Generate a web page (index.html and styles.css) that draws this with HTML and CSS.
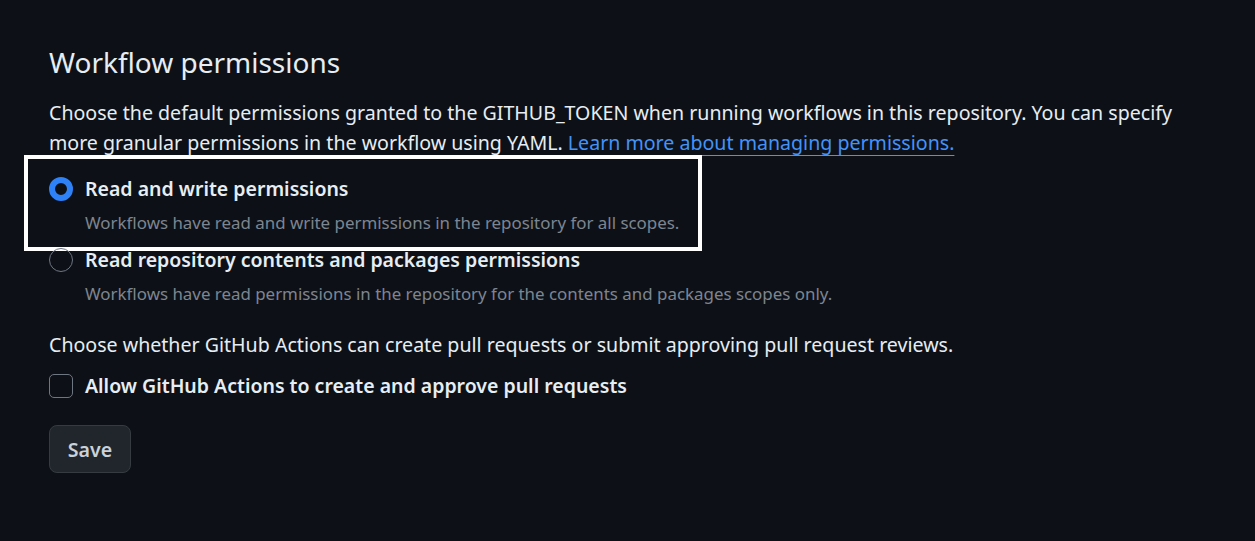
FILE: index.html
```html
<!DOCTYPE html>
<html lang="en">
<head>
<meta charset="utf-8">
<title>Workflow permissions</title>
<link rel="stylesheet" href="styles.css">
</head>
<body>
<main class="page">
  <h2 class="title">Workflow permissions</h2>
  <p class="lead">Choose the default permissions granted to the GITHUB_TOKEN when running workflows in this repository. You can specify more granular permissions in the workflow using YAML. <a href="#" class="link">Learn more about managing permissions.</a></p>

  <div class="options">
    <label class="option highlighted">
      <span class="radio checked"></span>
      <span class="option-text">
        <span class="option-label">Read and write permissions</span>
        <span class="option-note">Workflows have read and write permissions in the repository for all scopes.</span>
      </span>
    </label>
    <label class="option">
      <span class="radio"></span>
      <span class="option-text">
        <span class="option-label">Read repository contents and packages permissions</span>
        <span class="option-note">Workflows have read permissions in the repository for the contents and packages scopes only.</span>
      </span>
    </label>
  </div>

  <p class="lead second">Choose whether GitHub Actions can create pull requests or submit approving pull request reviews.</p>
  <label class="check-row">
    <span class="checkbox"></span>
    <span class="option-label">Allow GitHub Actions to create and approve pull requests</span>
  </label>

  <button class="btn" type="button">Save</button>
</main>
</body>
</html>
```

FILE: styles.css
```css
html, body {
  margin: 0;
  padding: 0;
  background: #0d1117;
}
body {
  font-family: "Noto Sans", "Open Sans", sans-serif;
  color: #e6edf3;
  font-size: 19.6px;
  line-height: 30px;
}
.page {
  padding: 40px 49px 0 49px;
}
.title {
  margin: 0;
  font-size: 28px;
  font-weight: 400;
  line-height: 44px;
}
.lead {
  margin: 14px 0 0 0;
  max-width: 1150px;
}
.link {
  color: #4493f8;
  text-decoration: underline;
  text-underline-offset: 5px;
}
.options {
  margin-top: 16px;
  display: flex;
  flex-direction: column;
  gap: 4px;
}
.option {
  display: flex;
  gap: 12px;
  align-items: flex-start;
  position: relative;
}
.highlighted::after {
  content: "";
  position: absolute;
  left: -25px;
  top: -19px;
  width: 670px;
  height: 88px;
  border: 4px solid #ffffff;
}
.radio {
  flex: none;
  width: 24px;
  height: 24px;
  border-radius: 50%;
  border: 1px solid #6e7681;
  box-sizing: border-box;
  margin-top: 3px;
}
.radio.checked {
  border: 6px solid #2f81f7;
  background: #0d1117;
}
.option-text {
  display: flex;
  flex-direction: column;
}
.option-label {
  font-weight: 600;
  font-size: 19.5px;
}
.option-note {
  color: #7d8590;
  font-size: 16.9px;
  line-height: 36px;
  margin-top: 1px;
}
.second {
  margin-top: 18px;
}
.check-row {
  margin-top: 11px;
  display: flex;
  gap: 12px;
  align-items: center;
}
.checkbox {
  width: 24px;
  height: 24px;
  border: 1px solid #6e7681;
  border-radius: 5px;
  box-sizing: border-box;
}
.btn {
  margin-top: 24px;
  font-family: inherit;
  font-size: 19.6px;
  font-weight: 600;
  color: #c9d1d9;
  background: #21262d;
  border: 1px solid #363b42;
  border-radius: 8px;
  width: 82px;
  height: 48px;
  padding: 0;
}
```
